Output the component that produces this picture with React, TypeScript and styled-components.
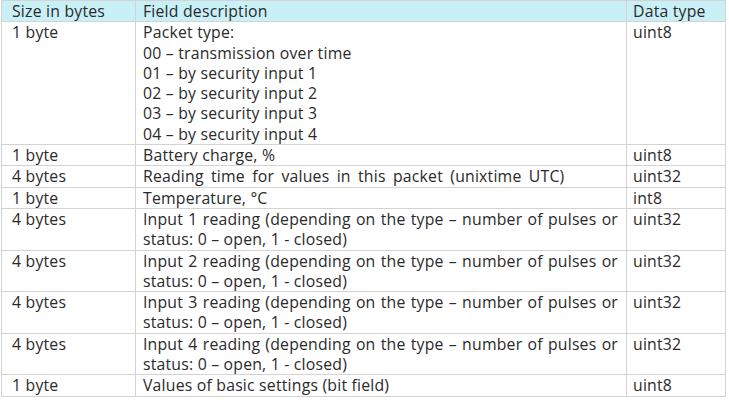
import React from "react";
import styled, { createGlobalStyle } from "styled-components";

const Global = createGlobalStyle`
  html, body { margin: 0; padding: 0; background: #ffffff; }
  body { font-family: "Open Sans", "Liberation Sans", sans-serif; }
`;

const Page = styled.div`
  padding: 0 0 0 1px;
`;

const Table = styled.table`
  border-collapse: collapse;
  table-layout: fixed;
  width: 724px;
  font-family: "Open Sans", "Liberation Sans", sans-serif;
  font-size: 15.8px;
  letter-spacing: 0.2px;
  line-height: 20.3px;
  color: #2a2a2a;
`;

const Th = styled.th<{ $pad: number }>`
  background: #c9eff7;
  border: 1px solid #d3d3d3;
  font-weight: 400;
  text-align: left;
  vertical-align: top;
  padding: 0 4px 0 ${(p) => p.$pad}px;
  height: 20px;
  box-sizing: border-box;
`;

const Td = styled.td<{ $pad: number }>`
  border: 1px solid #d3d3d3;
  text-align: left;
  vertical-align: top;
  padding: 0 8px 0 ${(p) => p.$pad}px;
`;

const Line = styled.div<{ $justify?: boolean; $spread?: number }>`
  white-space: ${(p) => (p.$justify ? "normal" : "nowrap")};
  text-align: ${(p) => (p.$justify ? "justify" : "left")};
  text-align-last: ${(p) => (p.$justify ? "justify" : "auto")};
  word-spacing: ${(p) => (p.$spread ? `${p.$spread}px` : "normal")};
`;

type Desc = { text: string; justify?: boolean; spread?: number };
type Row = { size: string; desc: Desc[]; type: string };

const rows: Row[] = [
  {
    size: "1 byte",
    desc: [
      { text: "Packet type:" },
      { text: "00 – transmission over time" },
      { text: "01 – by security input 1" },
      { text: "02 – by security input 2" },
      { text: "03 – by security input 3" },
      { text: "04 – by security input 4" },
    ],
    type: "uint8",
  },
  { size: "1 byte", desc: [{ text: "Battery charge, %" }], type: "uint8" },
  {
    size: "4 bytes",
    desc: [{ text: "Reading time for values in this packet (unixtime UTC)", spread: 3 }],
    type: "uint32",
  },
  { size: "1 byte", desc: [{ text: "Temperature, °C" }], type: "int8" },
  ...[1, 2, 3, 4].map((n) => ({
    size: "4 bytes",
    desc: [
      {
        text: `Input ${n} reading (depending on the type – number of pulses or`,
        justify: true,
      },
      { text: "status: 0 – open, 1 - closed)" },
    ],
    type: "uint32",
  })),
  {
    size: "1 byte",
    desc: [{ text: "Values of basic settings (bit field)" }],
    type: "uint8",
  },
];

export default function App() {
  return (
    <Page>
      <Global />
      <Table>
        <colgroup>
          <col style={{ width: 134 }} />
          <col style={{ width: 491 }} />
          <col style={{ width: 99 }} />
        </colgroup>
        <thead>
          <tr>
            <Th $pad={10}>Size in bytes</Th>
            <Th $pad={7}>Field description</Th>
            <Th $pad={6}>Data type</Th>
          </tr>
        </thead>
        <tbody>
          {rows.map((r, i) => (
            <tr key={i}>
              <Td $pad={10}>{r.size}</Td>
              <Td $pad={7}>
                {r.desc.map((d, j) => (
                  <Line key={j} $justify={d.justify} $spread={d.spread}>
                    {d.text}
                  </Line>
                ))}
              </Td>
              <Td $pad={6}>{r.type}</Td>
            </tr>
          ))}
        </tbody>
      </Table>
    </Page>
  );
}
